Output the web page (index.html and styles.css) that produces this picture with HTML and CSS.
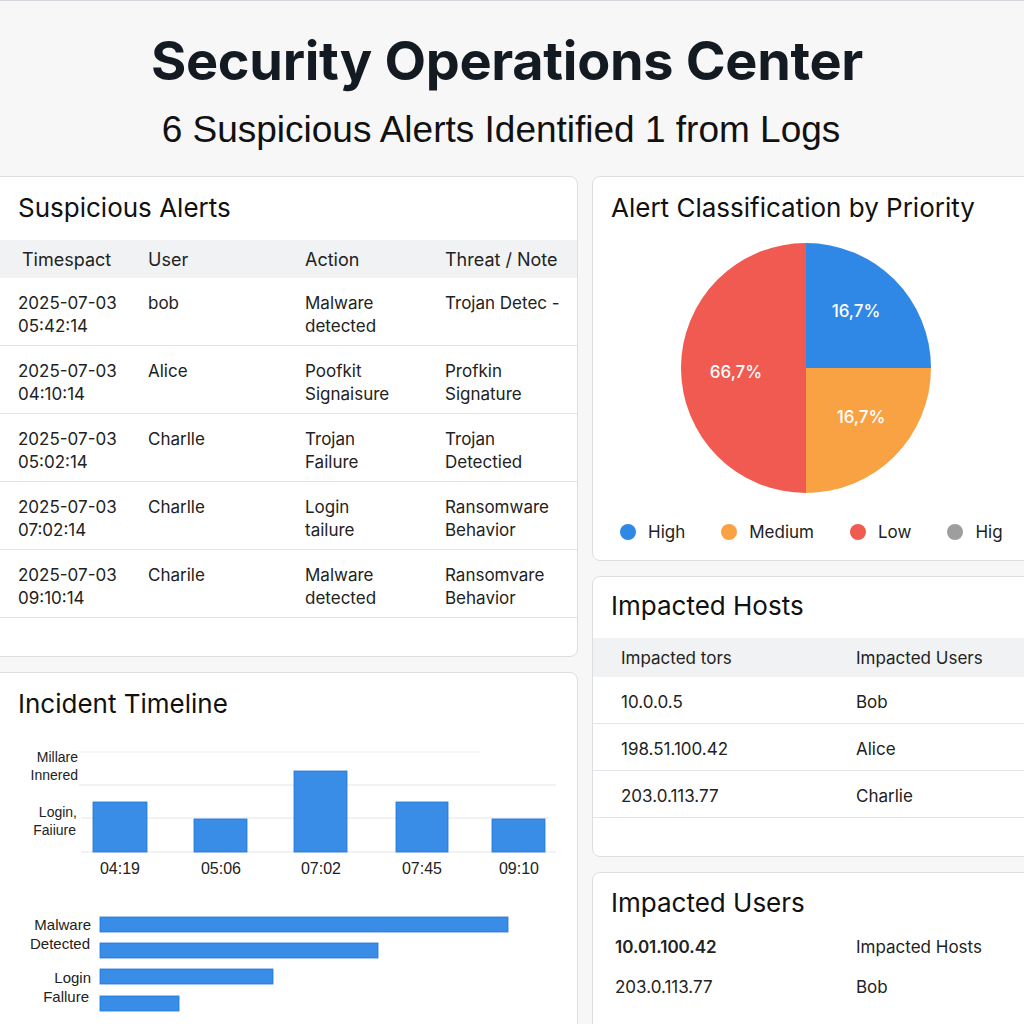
FILE: index.html
```html
<!DOCTYPE html>
<html>
<head>
<meta charset="utf-8">
<link rel="stylesheet" href="styles.css">
</head>
<body>
<header class="top">
  <h1 class="title">Security Operations Center</h1>
  <p class="subtitle">6 Suspicious Alerts Identified 1 from Logs</p>
</header>
<main class="dash">
  <div class="col">
    <section class="card alerts">
      <h2 class="card-title">Suspicious Alerts</h2>
      <div class="atable">
        <div class="arow ahead">
          <div>Timespact</div><div>User</div><div>Action</div><div>Threat / Note</div>
        </div>
        <div class="arow">
          <div>2025-07-03<br>05:42:14</div><div>bob</div><div>Malware<br>detected</div><div>Trojan Detec -</div>
        </div>
        <div class="arow">
          <div>2025-07-03<br>04:10:14</div><div>Alice</div><div>Poofkit<br>Signaisure</div><div>Profkin<br>Signature</div>
        </div>
        <div class="arow">
          <div>2025-07-03<br>05:02:14</div><div>Charlle</div><div>Trojan<br>Failure</div><div>Trojan<br>Detectied</div>
        </div>
        <div class="arow">
          <div>2025-07-03<br>07:02:14</div><div>Charlle</div><div>Login<br>tailure</div><div>Ransomware<br>Behavior</div>
        </div>
        <div class="arow">
          <div>2025-07-03<br>09:10:14</div><div>Charile</div><div>Malware<br>detected</div><div>Ransomvare<br>Behavior</div>
        </div>
      </div>
    </section>
    <section class="card timeline">
      <h2 class="card-title">Incident Timeline</h2>
      <svg class="tchart" width="588" height="294" viewBox="-10 730 588 294" xmlns="http://www.w3.org/2000/svg">
        <g class="grid">
          <line x1="75" y1="752" x2="480" y2="752" class="g-faint"/>
          <line x1="78" y1="785" x2="555" y2="785"/>
          <line x1="80" y1="818" x2="548" y2="818"/>
          <line x1="80" y1="852" x2="555" y2="852"/>
        </g>
        <g class="ylab" text-anchor="end">
          <text x="77" y="762">Millare</text>
          <text x="77" y="780">Innered</text>
          <text x="76" y="817">Login,</text>
          <text x="75" y="835">Faiiure</text>
        </g>
        <g class="bars">
          <rect x="92" y="802" width="54" height="50"/>
          <rect x="193" y="819" width="53" height="33"/>
          <rect x="293" y="771" width="53" height="81"/>
          <rect x="395" y="802" width="52" height="50"/>
          <rect x="491" y="819" width="53" height="33"/>
        </g>
        <g class="xlab" text-anchor="middle">
          <text x="119" y="874">04:19</text>
          <text x="220" y="874">05:06</text>
          <text x="320" y="874">07:02</text>
          <text x="421" y="874">07:45</text>
          <text x="518" y="874">09:10</text>
        </g>
        <g class="hlab" text-anchor="end">
          <text x="90" y="930">Malware</text>
          <text x="89" y="949">Detected</text>
          <text x="90" y="983">Login</text>
          <text x="88" y="1002">Fallure</text>
        </g>
        <g class="bars">
          <rect x="99" y="917" width="408" height="15"/>
          <rect x="99" y="943" width="278" height="15"/>
          <rect x="99" y="969" width="173" height="15"/>
          <rect x="99" y="996" width="79" height="15"/>
        </g>
      </svg>
    </section>
  </div>
  <div class="col">
    <section class="card priority">
      <h2 class="card-title">Alert Classification by Priority</h2>
      <svg class="pie" width="450" height="264" viewBox="592 236 450 264" xmlns="http://www.w3.org/2000/svg">
        <path class="s-high" d="M805,368 L805,243 A125,125 0 0,1 930,368 Z"/>
        <path class="s-med" d="M805,368 L930,368 A125,125 0 0,1 805,493 Z"/>
        <path class="s-low" d="M805,368 L805,493 A125,125 0 0,1 805,243 Z"/>
        <g class="plab" text-anchor="middle">
          <text x="855" y="317">16,7%</text>
          <text x="860" y="423">16,7%</text>
          <text x="735" y="378">66,7%</text>
        </g>
      </svg>
      <ul class="legend">
        <li><span class="dot d-high"></span>High</li>
        <li><span class="dot d-med"></span>Medium</li>
        <li><span class="dot d-low"></span>Low</li>
        <li><span class="dot d-grey"></span>Hig</li>
      </ul>
    </section>
    <section class="card hosts">
      <h2 class="card-title">Impacted Hosts</h2>
      <div class="htable">
        <div class="hrow hhead"><div>Impacted tors</div><div>Impacted Users</div></div>
        <div class="hrow"><div>10.0.0.5</div><div>Bob</div></div>
        <div class="hrow"><div>198.51.100.42</div><div>Alice</div></div>
        <div class="hrow"><div>203.0.113.77</div><div>Charlie</div></div>
      </div>
    </section>
    <section class="card users">
      <h2 class="card-title">Impacted Users</h2>
      <div class="utable">
        <div class="urow"><div class="strong">10.01.100.42</div><div>Impacted Hosts</div></div>
        <div class="urow"><div>203.0.113.77</div><div>Bob</div></div>
      </div>
    </section>
  </div>
</main>
</body>
</html>
```
FILE: styles.css
```css
html, body {
  margin: 0;
  padding: 0;
}
body {
  width: 1024px;
  height: 1024px;
  overflow: hidden;
  background: #f7f7f8;
  font-family: Inter, "Noto Sans", sans-serif;
  color: #1a1a1a;
}
.top {
  height: 175px;
  border-top: 1px solid #d3d6da;
  text-align: center;
  box-sizing: border-box;
  padding-top: 29px;
}
.title {
  margin: 0 0 0 -10px;
  font-size: 54px;
  line-height: 62px;
  font-weight: 700;
  color: #141a22;
  letter-spacing: -0.3px;
}
.subtitle {
  margin: 17px 0 0 -22px;
  font-family: "Liberation Sans", Arial, sans-serif;
  font-size: 37px;
  line-height: 42px;
  color: #111;
}
.dash {
  display: grid;
  grid-template-columns: 588px 450px;
  column-gap: 14px;
  margin-left: -10px;
  margin-top: 1px;
}
.col {
  display: flex;
  flex-direction: column;
  gap: 15px;
}
.card {
  background: #fff;
  border: 1px solid #dcdfe2;
  border-radius: 8px;
  overflow: hidden;
}
.card-title {
  margin: 0;
  font-size: 26px;
  line-height: 32px;
  font-weight: 400;
  color: #111;
}
/* Suspicious alerts */
.alerts {
  padding: 15px 0 38px;
}
.alerts .card-title {
  padding-left: 27px;
  margin-bottom: 16px;
}
.arow {
  display: grid;
  grid-template-columns: 130px 157px 140px 1fr;
  padding-left: 27px;
  height: 68px;
  box-sizing: border-box;
  padding-top: 14px;
  border-bottom: 1px solid #e3e5e8;
  font-size: 17px;
  line-height: 23px;
  color: #222;
}
.ahead {
  height: 38px;
  padding-top: 8px;
  background: #f1f2f4;
  border-bottom: none;
  font-size: 18px;
}
.ahead div:first-child {
  padding-left: 4px;
}
/* timeline */
.timeline {
  padding-top: 15px;
  height: 400px;
}
.timeline .card-title {
  padding-left: 27px;
}
.tchart {
  display: block;
  margin-top: 10px;
}
.grid line {
  stroke: #e4e6e9;
  stroke-width: 1.2;
}
.grid .g-faint {
  stroke: #eeeff1;
}
.bars rect {
  fill: #3a8de6;
  stroke: #1f74dc;
  stroke-width: 0.8;
}
.ylab text, .hlab text {
  font-family: "Liberation Sans", Arial, sans-serif;
  font-size: 14px;
  fill: #222;
}
.hlab text {
  font-size: 15px;
}
.xlab text {
  font-family: "Liberation Sans", Arial, sans-serif;
  font-size: 16px;
  fill: #222;
}
/* priority */
.priority {
  padding: 15px 0 16px 18px;
}
.pie {
  display: block;
  margin: 12px 0 0 -18px;
}
.s-high { fill: #2f87e6; }
.s-med { fill: #f9a244; }
.s-low { fill: #f05a50; }
.plab text {
  fill: #fff;
  font-size: 17px;
  font-weight: 500;
}
.legend {
  list-style: none;
  margin: 20px 0 0;
  padding: 0 0 0 9px;
  display: flex;
  gap: 36px;
  font-size: 17px;
  line-height: 24px;
  color: #222;
  white-space: nowrap;
}
.legend li {
  display: flex;
  align-items: center;
}
.dot {
  width: 16px;
  height: 16px;
  border-radius: 50%;
  margin-right: 12px;
}
.d-high { background: #2f87e6; }
.d-med { background: #f9a244; }
.d-low { background: #f05a50; }
.d-grey { background: #9e9e9e; }
/* hosts */
.hosts {
  padding: 13px 0 38px;
}
.hosts .card-title {
  padding-left: 18px;
  margin-bottom: 16px;
}
.hrow {
  display: grid;
  grid-template-columns: 235px 1fr;
  padding-left: 28px;
  height: 47px;
  box-sizing: border-box;
  padding-top: 3px;
  border-bottom: 1px solid #e3e5e8;
  align-items: center;
  font-size: 17px;
  color: #222;
}
.hhead {
  height: 39px;
  padding-top: 0;
  background: #f1f2f4;
  border-bottom: none;
}
/* users */
.users {
  padding: 14px 0 40px;
}
.users .card-title {
  padding-left: 18px;
}
.utable {
  margin-top: 8px;
}
.urow {
  display: grid;
  grid-template-columns: 241px 1fr;
  padding-left: 22px;
  height: 40px;
  align-items: center;
  font-size: 17px;
  color: #222;
}
.strong {
  font-weight: 600;
}
```
